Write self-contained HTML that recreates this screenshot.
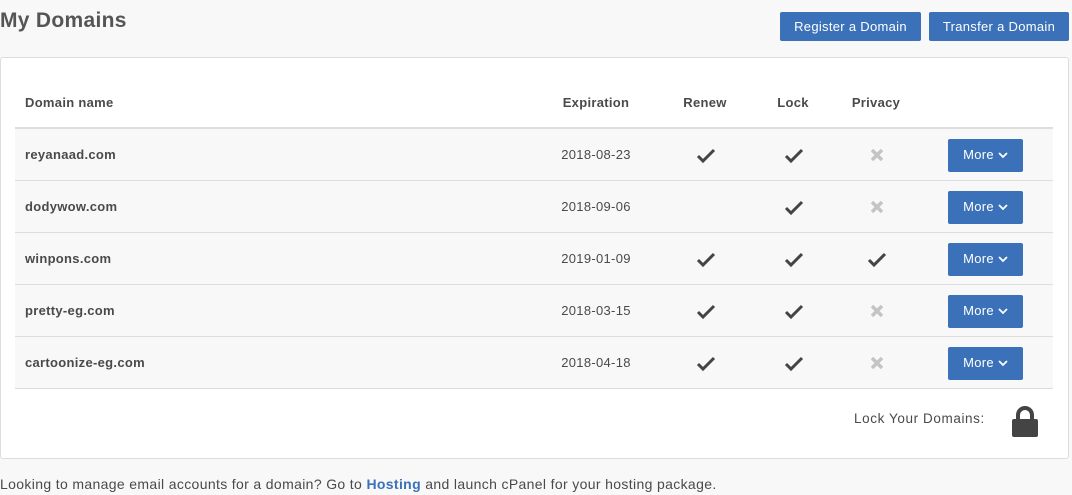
<!DOCTYPE html><html><head><style>
body{margin:0;width:1072px;height:495px;background:#f8f8f8;font-family:"Liberation Sans",sans-serif;color:#4a4a4a;position:relative;overflow:hidden}
h1{position:absolute;left:0;top:9px;margin:0;font-size:21px;font-weight:bold;color:#555;letter-spacing:0.3px}
.btn{position:absolute;background:#3a71b8;color:#fff;font-size:13px;border-radius:2px;text-align:center;line-height:29px;height:29px;letter-spacing:0.3px}
.panel{position:absolute;left:0;top:57px;width:1067px;height:400px;background:#fff;border:1px solid #dcdde0;border-radius:3px}
.hd,.row{position:absolute;left:15px;width:1038px;font-size:13px;font-weight:bold;letter-spacing:0.3px}
.hd{top:77px;height:50px;border-bottom:2px solid #ddd;z-index:2}
.row{height:51px;border-bottom:1px solid #ddd;background:#f8f8f8}
.c{position:absolute;top:0;line-height:51px}
.t{text-align:center}
.more{position:absolute;left:933px;top:10px;width:75px;height:33px;background:#3a71b8;border-radius:2px;color:#fff;font-size:13px;line-height:31px;text-align:center;font-weight:normal}
.date{font-weight:normal}
</style></head><body>
<h1>My Domains</h1>
<div class="btn" style="left:780px;top:12px;width:141px">Register a Domain</div>
<div class="btn" style="left:929px;top:12px;width:140px">Transfer a Domain</div>
<div class="panel"></div>
<div class="hd"><span class="c" style="left:10px">Domain name</span><span class="c t" style="left:531px;width:100px">Expiration</span><span class="c t" style="left:650px;width:80px">Renew</span><span class="c t" style="left:738px;width:80px">Lock</span><span class="c t" style="left:821px;width:80px">Privacy</span></div>
<svg width="0" height="0" style="position:absolute"><defs>
<symbol id="ck" viewBox="0 0 20 16"><path d="M2 8l5 5L18 2" fill="none" stroke="#444" stroke-width="3"/></symbol>
<symbol id="x" viewBox="0 0 14 14"><path d="M2 2l10 10M12 2L2 12" stroke="#c4c4c4" stroke-width="3.5"/></symbol>
<symbol id="cv" viewBox="0 0 10 7"><path d="M1 1l4 4 4-4" fill="none" stroke="#fff" stroke-width="1.8"/></symbol>
</defs></svg>
<div style="position:absolute;left:0;top:0">
<div class="row" style="top:129px"><span class="c" style="left:10px">reyanaad.com</span><span class="c t date" style="left:531px;width:100px">2018-08-23</span>
<svg style="position:absolute;left:681px;top:19px" width="20" height="16"><use href="#ck"/></svg>
<svg style="position:absolute;left:769px;top:19px" width="20" height="16"><use href="#ck"/></svg>
<svg style="position:absolute;left:855px;top:19px" width="14" height="14"><use href="#x"/></svg>
<div class="more">More <svg width="10" height="7"><use href="#cv"/></svg></div></div>
<div class="row" style="top:181px"><span class="c" style="left:10px">dodywow.com</span><span class="c t date" style="left:531px;width:100px">2018-09-06</span>
<svg style="position:absolute;left:769px;top:19px" width="20" height="16"><use href="#ck"/></svg>
<svg style="position:absolute;left:855px;top:19px" width="14" height="14"><use href="#x"/></svg>
<div class="more">More <svg width="10" height="7"><use href="#cv"/></svg></div></div>
<div class="row" style="top:233px"><span class="c" style="left:10px">winpons.com</span><span class="c t date" style="left:531px;width:100px">2019-01-09</span>
<svg style="position:absolute;left:681px;top:19px" width="20" height="16"><use href="#ck"/></svg>
<svg style="position:absolute;left:769px;top:19px" width="20" height="16"><use href="#ck"/></svg>
<svg style="position:absolute;left:852px;top:19px" width="20" height="16"><use href="#ck"/></svg>
<div class="more">More <svg width="10" height="7"><use href="#cv"/></svg></div></div>
<div class="row" style="top:285px"><span class="c" style="left:10px">pretty-eg.com</span><span class="c t date" style="left:531px;width:100px">2018-03-15</span>
<svg style="position:absolute;left:681px;top:19px" width="20" height="16"><use href="#ck"/></svg>
<svg style="position:absolute;left:769px;top:19px" width="20" height="16"><use href="#ck"/></svg>
<svg style="position:absolute;left:855px;top:19px" width="14" height="14"><use href="#x"/></svg>
<div class="more">More <svg width="10" height="7"><use href="#cv"/></svg></div></div>
<div class="row" style="top:337px"><span class="c" style="left:10px">cartoonize-eg.com</span><span class="c t date" style="left:531px;width:100px">2018-04-18</span>
<svg style="position:absolute;left:681px;top:19px" width="20" height="16"><use href="#ck"/></svg>
<svg style="position:absolute;left:769px;top:19px" width="20" height="16"><use href="#ck"/></svg>
<svg style="position:absolute;left:855px;top:19px" width="14" height="14"><use href="#x"/></svg>
<div class="more">More <svg width="10" height="7"><use href="#cv"/></svg></div></div>
</div>
<div style="position:absolute;left:854px;top:411px;font-size:13.5px;color:#4a4a4a;letter-spacing:0.6px">Lock Your Domains:</div>
<svg style="position:absolute;left:1011px;top:406px" width="28" height="31" viewBox="0 0 28 31"><path d="M7 14V9a7 7 0 0 1 14 0v5" fill="none" stroke="#444" stroke-width="4"/><rect x="1" y="13" width="26" height="18" rx="2" fill="#444"/></svg>
<div style="position:absolute;left:0;top:476px;font-size:14px;color:#4a4a4a;letter-spacing:0.35px">Looking to manage email accounts for a domain? Go to <b style="color:#3a71b8">Hosting</b> and launch cPanel for your hosting package.</div>
</body></html>
